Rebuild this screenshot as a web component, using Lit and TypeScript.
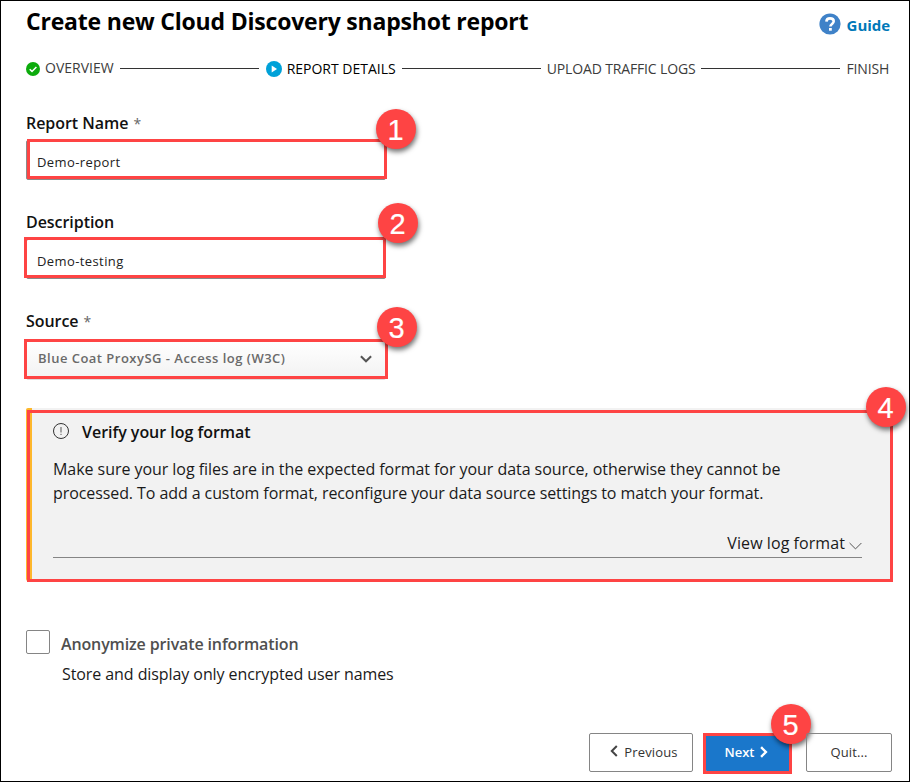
import { LitElement, html, css, svg } from "lit";
import { customElement, property } from "lit/decorators.js";
import { classMap } from "lit/directives/class-map.js";

@customElement("step-marker")
export class StepMarker extends LitElement {
  @property({ type: Number }) number = 1;

  static styles = css`
    :host {
      display: flex;
      align-items: center;
      justify-content: center;
      width: 40px;
      height: 40px;
      border-radius: 50%;
      background: #fe4444;
      color: #fff;
      font: 29px/40px "Liberation Sans", sans-serif;
      -webkit-text-stroke: 0.2px #fff;
      box-shadow: 1px 3px 5px rgba(0, 0, 0, 0.55);
    }
    span {
      margin-left: -1px;
      padding-top: 1px;
    }
  `;

  render() {
    return html`<span>${this.number}</span>`;
  }
}

const doneIcon = svg`
  <circle cx="7" cy="7" r="7" fill="#0cab0c"/>
  <path d="M3.7 7.2 6 9.4 10.4 4.9" fill="none" stroke="#fff" stroke-width="1.5"/>`;

const currentIcon = svg`
  <circle cx="8" cy="8" r="8" fill="#00a1d8"/>
  <path d="M5.7 4.6 11 8 5.7 11.4Z" fill="#fff"/>`;

@customElement("app-root")
export class AppRoot extends LitElement {
  static styles = css`
    :host {
      display: block;
      font-family: "Open Sans", "Noto Sans", sans-serif;
      color: #1a1a1a;
    }
    * {
      box-sizing: border-box;
    }
    svg {
      display: block;
      flex: none;
    }
    .page {
      width: 910px;
      height: 782px;
      border: 1px solid #000;
      padding: 0 17px 0 25px;
      background: #fff;
      overflow: hidden;
      white-space: nowrap;
    }
    .header {
      display: flex;
      justify-content: space-between;
      height: 40px;
    }
    .title {
      margin: 0;
      font-size: 23px;
      font-weight: 700;
      line-height: 41px;
      letter-spacing: -0.2px;
      color: #000;
    }
    .guide {
      display: flex;
      align-items: center;
      gap: 6px;
      height: 46px;
      margin-right: 2px;
      font-size: 15px;
      font-weight: 700;
      line-height: 20px;
      letter-spacing: -0.05px;
      color: #0078b8;
    }
    .guide span {
      padding-top: 1px;
    }
    .steps {
      display: flex;
      align-items: center;
      height: 25px;
      margin-top: 15px;
      font-size: 14px;
      line-height: 23px;
      color: #3c3c3c;
    }
    .step {
      display: flex;
      align-items: center;
      gap: 5px;
      flex: none;
    }
    .step.done span {
      padding-bottom: 2px;
    }
    .step.current {
      color: #000;
      margin-left: 1px;
    }
    .step.tight {
      letter-spacing: -0.15px;
    }
    .rail {
      height: 1px;
      width: 139px;
      flex: none;
      background: #333;
      margin: 0 6px;
    }
    .rail:first-of-type {
      margin-right: 7px;
    }
    .field {
      position: relative;
      width: 360px;
      height: 99px;
    }
    .fields {
      margin-top: 30px;
    }
    .label {
      display: block;
      height: 24px;
      font-size: 16px;
      font-weight: 540;
      line-height: 24px;
      letter-spacing: -0.05px;
      color: #111;
    }
    .label i {
      font-style: normal;
      font-weight: 400;
      font-size: 14px;
      color: #666;
      margin-left: 1px;
    }
    .input {
      display: flex;
      align-items: center;
      justify-content: space-between;
      height: 40px;
      margin-top: 5px;
      padding: 4px 11px 0 10px;
      border: 1px solid #8a8a8a;
      border-radius: 2px;
      font-size: 13px;
      letter-spacing: 0.4px;
      color: #222;
    }
    .input.select {
      margin-top: 7px;
      padding: 0 13px 3px 11px;
      border-color: #ddd;
      background: linear-gradient(#fff, #f2f2f2);
      font-weight: 600;
      letter-spacing: 0.48px;
      color: #6a6a6a;
    }
    .input.select span {
      padding-bottom: 2px;
    }
    .outline {
      position: absolute;
      border: 3px solid #fe4444;
    }
    .outline.one {
      left: 1px;
      top: 28px;
      width: 360px;
      height: 40px;
    }
    .outline.two {
      left: -2px;
      top: 27px;
      width: 362px;
      height: 41px;
    }
    .outline.three {
      left: -2px;
      top: 30px;
      width: 364px;
      height: 40px;
    }
    .outline.four {
      left: 1px;
      top: 2px;
      width: 866px;
      height: 172px;
    }
    .outline.five {
      left: -3px;
      top: 0;
      width: 89px;
      height: 41px;
    }
    step-marker {
      position: absolute;
    }
    .at-one {
      left: 350px;
      top: -2px;
    }
    .at-two {
      left: 352px;
      top: -7px;
    }
    .at-three {
      left: 351px;
      top: -2px;
    }
    .at-four {
      left: 840px;
      top: -21px;
    }
    .at-five {
      left: 65px;
      top: -29px;
    }
    .notice {
      position: relative;
      width: 866px;
      height: 173px;
      border-left: 6px solid #fdb72c;
      border-radius: 2px;
      background: #f2f2f2;
      padding: 12px 30px 0 21px;
      font-size: 16px;
      line-height: 24px;
    }
    .notice .outline,
    .notice step-marker {
      margin-left: -6px;
    }
    .notice-head {
      display: flex;
      align-items: center;
      gap: 13px;
      font-weight: 540;
      letter-spacing: -0.03px;
      color: #111;
    }
    .notice-head svg {
      margin-top: -2px;
    }
    .notice p {
      margin: 13px 0 0;
    }
    .line-one,
    .line-two {
      display: block;
      letter-spacing: -0.05px;
    }
    .line-two {
      letter-spacing: -0.085px;
    }
    .view {
      display: flex;
      justify-content: flex-end;
      align-items: center;
      gap: 4px;
      height: 29px;
      margin-top: 24px;
      border-bottom: 1px solid #858585;
      letter-spacing: 0.07px;
    }
    .view svg {
      margin-top: 6px;
    }
    .privacy {
      display: flex;
      gap: 11px;
      margin-top: 49px;
      font-size: 16px;
      line-height: 30px;
      color: #1a1a1a;
    }
    .check {
      width: 24px;
      height: 24px;
      border: 1px solid #858585;
      border-radius: 2px;
    }
    .privacy-text {
      margin-top: -1px;
    }
    .privacy-title {
      font-weight: 600;
      letter-spacing: -0.13px;
      color: #4f4f4f;
    }
    .privacy-note {
      padding-left: 1px;
      letter-spacing: -0.08px;
    }
    .actions {
      display: flex;
      justify-content: flex-end;
      margin-top: 44px;
      height: 39px;
      font-size: 13px;
    }
    .button {
      position: relative;
      display: flex;
      align-items: center;
      justify-content: center;
      gap: 6px;
      height: 39px;
      padding-bottom: 2px;
      border: 1px solid #858585;
      border-radius: 2px;
      color: #333;
    }
    .prev {
      width: 104px;
      padding-left: 6px;
      letter-spacing: 0.15px;
    }
    .prev svg {
      margin-top: -2px;
    }
    .next {
      width: 86px;
      margin: 0 14px 0 13px;
      padding-right: 5px;
      border: 0;
      background: #1a77cb;
      color: #fff;
      font-weight: 600;
    }
    .quit {
      width: 86px;
      letter-spacing: 0.1px;
    }
  `;

  private step(text: string, kind: string, icon: unknown = null) {
    return html`<div
      class=${classMap({ step: true, [kind]: true })}
    >${icon}<span>${text}</span></div>`;
  }

  render() {
    return html`
      <main class="page">
        <header class="header">
          <h1 class="title">Create new Cloud Discovery snapshot report</h1>
          <div class="guide">
            <svg width="22" height="22" viewBox="0 0 22 22">
              <circle cx="11" cy="11" r="10.6" fill="#3f82c8" />
              <path d="M7.4 8.6C7.5 6.5 9 5.4 11 5.4c2.100 0 3.700 1.100 3.700 2.900 0 2.600-3.300 2.600-3.300 5.200" fill="none" stroke="#fff" stroke-width="2.600" />
              <rect x="10" y="15" width="2.800" height="2.700" fill="#fff" />
            </svg>
            <span>Guide</span>
          </div>
        </header>

        <nav class="steps">
          ${this.step("OVERVIEW", "done", html`<svg width="14" height="14" viewBox="0 0 14 14">${doneIcon}</svg>`)}
          <div class="rail"></div>
          ${this.step("REPORT DETAILS", "current", html`<svg width="16" height="16" viewBox="0 0 16 16">${currentIcon}</svg>`)}
          <div class="rail"></div>
          ${this.step("UPLOAD TRAFFIC LOGS", "tight")}
          <div class="rail"></div>
          ${this.step("FINISH", "tight")}
        </nav>

        <section class="fields">
          <div class="field">
            <span class="label">Report Name <i>*</i></span>
            <div class="input">Demo-report</div>
            <div class="outline one"></div>
            <step-marker class="at-one" .number=${1}></step-marker>
          </div>
          <div class="field">
            <span class="label">Description</span>
            <div class="input">Demo-testing</div>
            <div class="outline two"></div>
            <step-marker class="at-two" .number=${2}></step-marker>
          </div>
          <div class="field">
            <span class="label">Source <i>*</i></span>
            <div class="input select">
              <span>Blue Coat ProxySG - Access log (W3C)</span>
              <svg width="12" height="8" viewBox="0 0 12 8">
                <path d="M.9 1.200 6 6.300 11.100 1.200" fill="none" stroke="#555" stroke-width="2" />
              </svg>
            </div>
            <div class="outline three"></div>
            <step-marker class="at-three" .number=${3}></step-marker>
          </div>
        </section>

        <section class="notice">
          <div class="notice-head">
            <svg width="16" height="16" viewBox="0 0 16 16">
              <circle cx="8" cy="8" r="7.500" fill="none" stroke="#333" />
              <path d="M8 4v5.500M8 10.800v1.200" stroke="#555" />
            </svg>
            <span>Verify your log format</span>
          </div>
          <p>
            <span class="line-one">Make sure your log files are in the expected format for your data source, otherwise they cannot be</span>
            <span class="line-two">processed. To add a custom format, reconfigure your data source settings to match your format.</span>
          </p>
          <div class="view">
            <span>View log format</span>
            <svg width="13" height="8" viewBox="0 0 13 8">
              <path d="M.6 1 6.500 6.900 12.400 1" fill="none" stroke="#555" />
            </svg>
          </div>
          <div class="outline four"></div>
          <step-marker class="at-four" .number=${4}></step-marker>
        </section>

        <section class="privacy">
          <div class="check"></div>
          <div class="privacy-text">
            <div class="privacy-title">Anonymize private information</div>
            <div class="privacy-note">Store and display only encrypted user names</div>
          </div>
        </section>

        <footer class="actions">
          <div class="button prev">
            <svg width="8" height="12" viewBox="0 0 8 12">
              <path d="M6.800 1 1.800 6 6.800 11" fill="none" stroke="#444" stroke-width="2" />
            </svg>
            <span>Previous</span>
          </div>
          <div class="button next">
            <span>Next</span>
            <svg width="8" height="12" viewBox="0 0 8 12">
              <path d="M1.100 1.200 5.900 6 1.100 10.800" fill="none" stroke="#fff" stroke-width="2.400" />
            </svg>
            <div class="outline five"></div>
            <step-marker class="at-five" .number=${5}></step-marker>
          </div>
          <div class="button quit">Quit...</div>
        </footer>
      </main>
    `;
  }
}
